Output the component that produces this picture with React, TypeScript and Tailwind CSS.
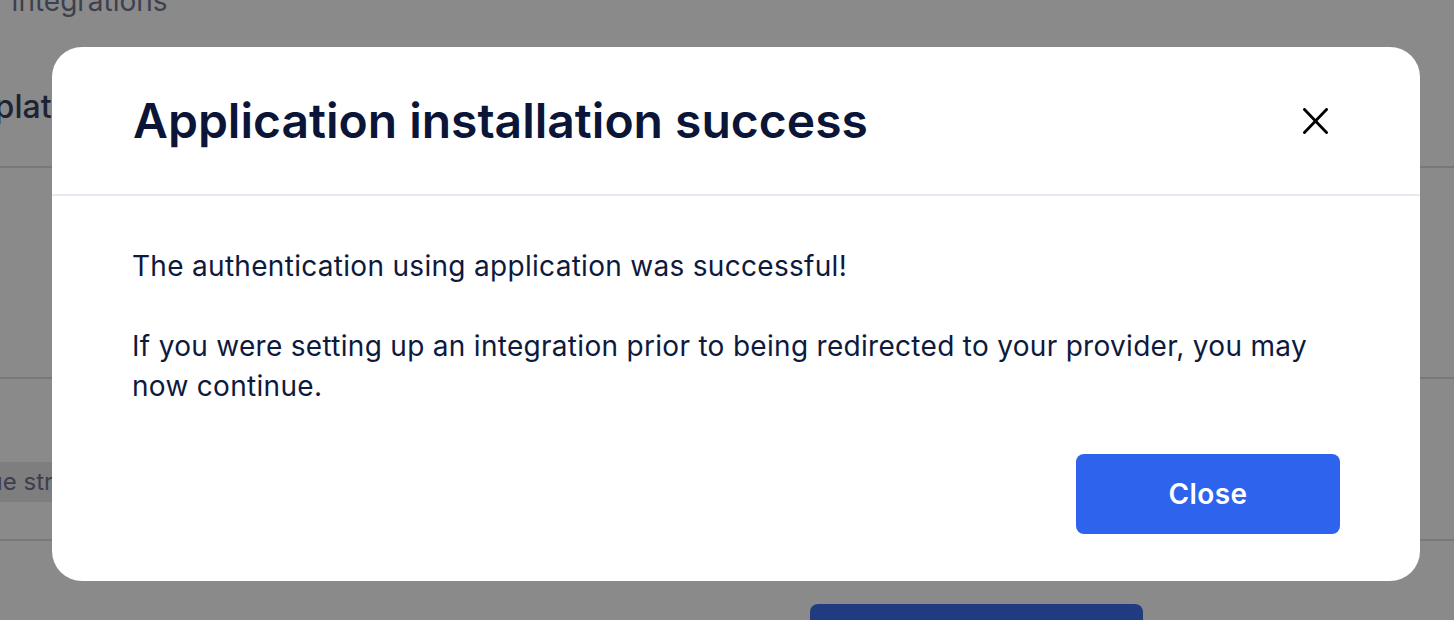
import React from "react";

export default function App() {
  return (
    <div
      className="relative h-[620px] w-[1454px] overflow-hidden bg-white"
      style={{ fontFamily: "Inter, 'Noto Sans', sans-serif" }}
    >
      {/* Background page */}
      <div className="flex flex-col">
        <div className="-mt-[19px] -ml-[57px] text-[28px] leading-[40px] text-[#6f7892]">Your integrations</div>
        <div className="mt-[64px] -ml-[71px] text-[32px] font-medium leading-[44px] text-[#39425f]">Templates</div>
        <div className="mt-[37px] h-[2px] w-full bg-[#dedede]" />
        <div className="h-[209px]" />
        <div className="h-[2px] w-full bg-[#dedede]" />
        <div className="flex h-[160px] items-start pt-[83px]">
          <span className="-ml-[76px] rounded bg-[#e9e9e9] px-3 py-[2px] text-[24px] leading-[36px] text-[#6f7690]">
            Unique string
          </span>
        </div>
        <div className="h-[2px] w-full bg-[#dedede]" />
        <div className="mt-[63px] ml-[810px] h-[60px] w-[333px] rounded-lg bg-[#3d6ded]" />
      </div>

      {/* Overlay */}
      <div className="absolute inset-0 bg-black/[0.46]">
        <div className="ml-[52px] mt-[47px] w-[1368px] rounded-[30px] bg-white">
          <div className="flex h-[149px] items-center justify-between border-b-2 border-[#e6eaf2] pl-[81px] pr-[92px]">
            <h2 className="text-[48px] font-semibold leading-[56px] text-[#0b1538]">
              Application installation success
            </h2>
            <svg width="25" height="26" viewBox="0 0 25 26" fill="none" className="text-black">
              <path d="M1.5 1.5L23.5 24.5M23.5 1.5L1.5 24.5" stroke="currentColor" strokeWidth="2.8" strokeLinecap="square" />
            </svg>
          </div>
          <div className="flex flex-col px-[80px] pt-[50px] pb-[47px] text-[28px] leading-[40px] tracking-[0.3px] text-[#0d1a3d]">
            <p>The authentication using application was successful!</p>
            <p className="mt-[40px]">
              If you were setting up an integration prior to being redirected to your provider, you may now continue.
            </p>
            <div className="mt-[48px] flex justify-end">
              <button className="h-[80px] w-[264px] rounded-lg bg-[#2d63ed] text-[28px] font-semibold tracking-[0.4px] text-white">
                Close
              </button>
            </div>
          </div>
        </div>
      </div>
    </div>
  );
}
